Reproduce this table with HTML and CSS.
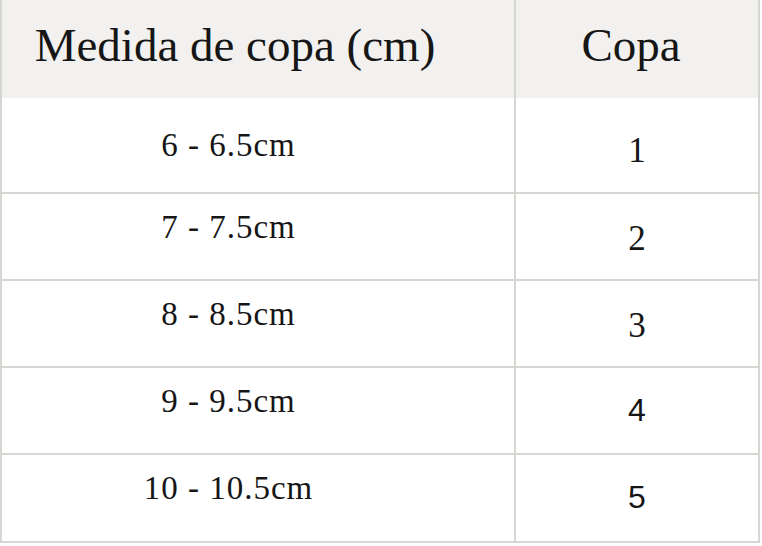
FILE: index.html
```html
<!DOCTYPE html>
<html lang="es">
<head>
<meta charset="utf-8">
<title>Medida de copa</title>
<link rel="stylesheet" href="styles.css">
</head>
<body>
<div class="table">
  <div class="row head">
    <div class="cell c1"><span class="h h1">Medida de copa (cm)</span></div>
    <div class="cell c2"><span class="h h2">Copa</span></div>
  </div>
  <div class="row r1">
    <div class="cell c1"><span class="size">6 - 6.5cm</span></div>
    <div class="cell c2"><span class="cup serif">1</span></div>
  </div>
  <div class="row r2">
    <div class="cell c1"><span class="size">7 - 7.5cm</span></div>
    <div class="cell c2"><span class="cup serif">2</span></div>
  </div>
  <div class="row r3">
    <div class="cell c1"><span class="size">8 - 8.5cm</span></div>
    <div class="cell c2"><span class="cup serif">3</span></div>
  </div>
  <div class="row r4">
    <div class="cell c1"><span class="size">9 - 9.5cm</span></div>
    <div class="cell c2"><span class="cup sans">4</span></div>
  </div>
  <div class="row r5">
    <div class="cell c1"><span class="size">10 - 10.5cm</span></div>
    <div class="cell c2"><span class="cup sans">5</span></div>
  </div>
</div>
</body>
</html>
```

FILE: styles.css
```css
* { box-sizing: border-box; }
html, body { margin: 0; padding: 0; background: #ffffff; }
body { color: #161616; font-family: "Liberation Serif", serif; }

.table {
  width: 760px;
  border-left: 2px solid #d6d6d3;
  border-right: 2px solid #d6d6d3;
}

.row {
  display: grid;
  grid-template-columns: 514px 242px;
  height: 87px;
  border-bottom: 2px solid #d6d6d3;
}

.row.head {
  height: 98px;
  border-bottom: none;
  background: #f2f1ef;
}
.row.r1 { height: 96px; }
.row.r5 { height: 88px; }

.cell {
  text-align: center;
}
.c1 {
  border-right: 2px solid #d6d6d3;
  padding-right: 59px;
}

.h {
  display: block;
  font-family: "Liberation Serif", serif;
  font-size: 47px;
  line-height: 47px;
  padding-top: 22px;
  white-space: nowrap;
}
.head .c1 { padding-right: 46px; }
.head .c2 { padding-right: 12px; }

.size {
  display: block;
  font-family: "Liberation Serif", serif;
  font-size: 33px;
  line-height: 33px;
  letter-spacing: 1px;
  padding-top: 17px;
  white-space: nowrap;
}

.cup {
  display: block;
  line-height: 1;
}
.cup.serif {
  font-family: "Liberation Serif", serif;
  font-size: 35px;
  padding-top: 27px;
}
.cup.sans {
  font-family: "Liberation Sans", sans-serif;
  font-size: 32px;
  padding-top: 26px;
}

.r1 .size { padding-top: 31px; }
.r1 .cup.serif { padding-top: 35px; }
```
